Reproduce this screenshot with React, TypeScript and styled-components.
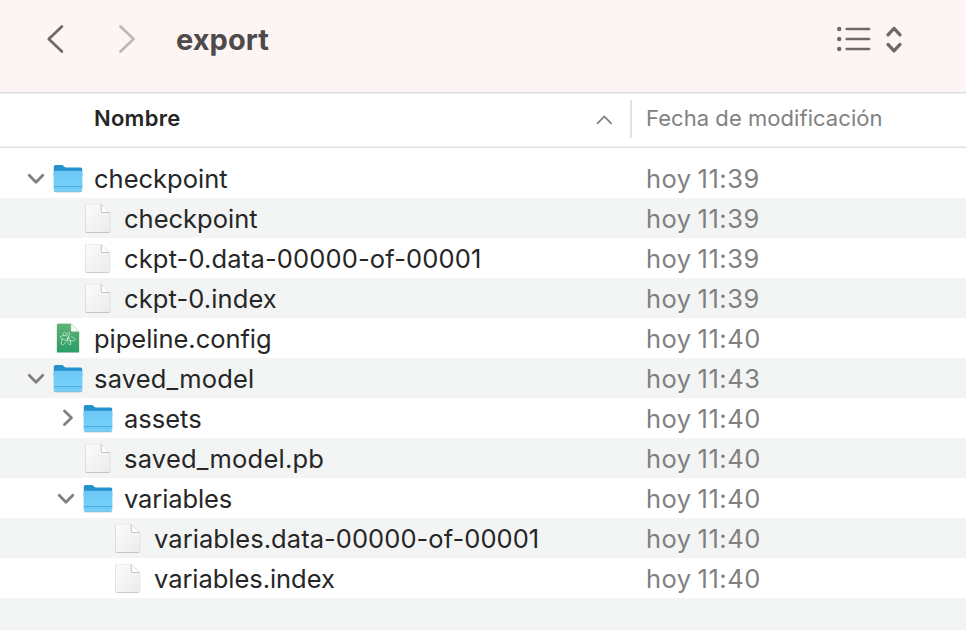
import React from 'react';
import styled, { createGlobalStyle } from 'styled-components';

const GlobalStyle = createGlobalStyle`
  * { box-sizing: border-box; }
  body {
    margin: 0;
    overflow: hidden;
    background: #fff;
    font-family: Inter, "Liberation Sans", sans-serif;
    -webkit-font-smoothing: antialiased;
  }
  svg { display: block; flex: none; overflow: visible; }
`;

const Window = styled.main`
  width: 966px;
  height: 630px;
  display: flex;
  flex-direction: column;
  overflow: hidden;
`;

const Toolbar = styled.header`
  flex: none;
  height: 92px;
  display: flex;
  align-items: center;
  padding: 0 63px 14px 46px;
  background: #fdf4f4;
`;

const NavButton = styled.button<{ $dim?: boolean }>`
  display: flex;
  width: 72px;
  padding: 0;
  border: 0;
  background: none;
  color: ${(p) => (p.$dim ? '#c1b6b7' : '#706768')};
`;

const Title = styled.h1`
  margin: 0 auto 0 -14px;
  padding-top: 2px;
  font-size: 29px;
  line-height: 36px;
  font-weight: 700;
  letter-spacing: 0.05px;
  color: #4d4a4b;
`;

const ViewControl = styled.div`
  display: flex;
  align-items: center;
  gap: 14px;
  color: #706768;
`;

const ColumnHeader = styled.div`
  flex: none;
  height: 56px;
  display: flex;
  align-items: center;
  padding-bottom: 3px;
  border-top: 1px solid #d9dadb;
  border-bottom: 1px solid #dcdddd;
  box-shadow: inset 0 1px #f0f1f1, inset 0 -1px #f3f3f3;
  font-size: 22px;
  line-height: 28px;
`;

const NameHeading = styled.div`
  width: 632px;
  height: 38px;
  display: flex;
  align-items: center;
  justify-content: space-between;
  padding: 0 17px 2px 94px;
  border-right: 2px solid #e3e3e3;
  font-weight: 600;
  letter-spacing: 0.25px;
  color: #262626;
`;

const SortMark = styled.span`
  padding-top: 4px;
  color: #808080;
`;

const DateHeading = styled.div`
  padding: 0 0 2px 14px;
  letter-spacing: 0.05px;
  color: #818181;
`;

const List = styled.div`
  flex: 1;
  padding-top: 10px;
`;

const Row = styled.div`
  height: 40px;
  display: flex;
  align-items: center;
  font-size: 25.5px;
  line-height: 32px;
  &:nth-child(even) { background: #f3f5f4; }
`;

const NameCell = styled.div<{ $depth: number }>`
  width: 646px;
  display: flex;
  align-items: center;
  padding-left: ${(p) => 23 + p.$depth * 30}px;
  color: #262626;
`;

const Disclosure = styled.span`
  width: 30px;
  display: flex;
  padding-top: 1px;
  color: #808080;
`;

const IconSlot = styled.span`
  width: 41px;
  display: flex;
`;

const Label = styled.span<{ $spacing: number }>`
  padding-top: 2px;
  white-space: nowrap;
  letter-spacing: ${(p) => p.$spacing}px;
`;

const DateCell = styled.div`
  padding-top: 2px;
  color: #808080;
  white-space: nowrap;
  letter-spacing: 0.5px;
  word-spacing: -1.8px;
`;

const Stroke = ({ d, w, h, sw }: { d: string; w: number; h: number; sw: number }) => (
  <svg width={w} height={h} viewBox={`0 0 ${w} ${h}`} fill="none" stroke="currentColor" strokeWidth={sw} strokeLinecap="round" strokeLinejoin="round">
    <path d={d} />
  </svg>
);

const Gradients = () => (
  <svg width="0" height="0">
    <defs>
      <linearGradient id="folder" x1="0" y1="0" x2="0" y2="1">
        <stop offset="0" stopColor="#6bc6f4" />
        <stop offset="1" stopColor="#79d3fe" />
      </linearGradient>
      <linearGradient id="paper" x1="0" y1="0" x2="1" y2="1">
        <stop offset="0" stopColor="#fcfcfc" />
        <stop offset="1" stopColor="#ebebeb" />
      </linearGradient>
      <linearGradient id="green" x1="0" y1="0" x2="0" y2="1">
        <stop offset="0" stopColor="#5fb573" />
        <stop offset="1" stopColor="#2b9c68" />
      </linearGradient>
    </defs>
  </svg>
);

const FolderIcon = () => (
  <svg width="30" height="32" viewBox="0 0 30 32">
    <path d="M.8 12h28.4v16.6q0 1.9-1.9 1.9H2.7q-1.9 0-1.9-1.9z" fill="#000" opacity=".2" />
    <path d="M.8 4.9q0-1.8 1.7-1.8h6.1c1.9 0 2.3 2.3 4.2 2.3h14.7q1.7 0 1.7 1.7V14H.8z" fill="#2490cc" />
    <path d="M.7 10.3q0-1.6 1.6-1.6h25.4q1.6 0 1.6 1.6v17.3q0 1.8-1.8 1.8h-25q-1.8 0-1.8-1.8z" fill="url(#folder)" />
    <path d="M1 24.5h28" stroke="#48a8d8" strokeWidth=".9" />
    <path d="M1.4 26.2h27.2M1.8 29.2h26.4" stroke="#57b5e2" strokeWidth=".6" />
  </svg>
);

const FileIcon = () => (
  <svg width="30" height="32" viewBox="0 0 30 32">
    <path d="M2.2 3.8Q2.2 2 4 2h14.2l9 9v18.1q0 1.8-1.8 1.8H4q-1.8 0-1.8-1.8z" fill="#000" opacity=".2" />
    <path d="M2.6 3.8Q2.6 2.2 4.2 2.2h14l8.7 8.6v17.6q0 1.7-1.7 1.7h-21q-1.6 0-1.6-1.7z" fill="url(#paper)" />
    <path d="M18.3 2.4v7.1q0 1 1 1h7.2z" fill="#fdfdfd" />
    <path d="M18.3 2.4v7.1q0 1 1 1h7.2" fill="none" stroke="#bdbdbd" strokeWidth=".9" />
    <path d="m18.3 2.3 8.4 8.3" stroke="#dadada" strokeWidth=".6" />
  </svg>
);

const ConfigIcon = () => (
  <svg width="30" height="32" viewBox="0 0 30 32">
    <path d="M3.7 2.6q0-.9.9-.9H18l8.2 8.2v20q0 .9-.9.9H4.6q-.9 0-.9-.9z" fill="#17613d" opacity=".35" />
    <path d="M4 2.6q0-.9.9-.9h13.5l7.7 7.7v19.9q0 .9-.9.9H4.9q-.9 0-.9-.9z" fill="url(#green)" />
    <path d="M18 1.5v7q0 1 1 1h7.2z" fill="#f7f8f7" stroke="#c4d5ca" strokeWidth=".5" />
    <g fill="none" stroke="#c9ecd2" strokeWidth=".75" strokeLinecap="round">
      <path d="M13.2 13.7c-3.1-.3-5.8.1-6 1.2-.2 1.2 2.7 2.7 6.2 3.5 3.4.8 6.8.8 8.2-.1 1.4-1-.3-2.4-2.9-3.4" />
      <path d="M9.4 16.5c-1.2 3-1.6 5.8-.5 6.4 1.2.6 3.2-1.6 5-4.6 2-3.2 3.3-6.6 2.4-7.6-.6-.7-1.7 0-2.8 1.2" />
      <path d="M11 13.4c-.7-1.6-.6-2.8.2-3 1.1-.4 2.9 1.9 4.5 4.9 1.7 3.1 2.7 6.6 1.7 7.3-.8.5-1.8-.4-2.8-1.7" />
    </g>
    <circle cx="14.5" cy="16.4" r=".8" fill="#e8f8eb" />
  </svg>
);

type Kind = 'folder' | 'file' | 'config';
type Entry = { name: string; kind: Kind; depth: number; open?: boolean; date: string; spacing: number };

const icons: Record<Kind, React.FC> = { folder: FolderIcon, file: FileIcon, config: ConfigIcon };

const entries: Entry[] = [
  { name: 'checkpoint', kind: 'folder', depth: 0, open: true, date: 'hoy 11:39', spacing: 0 },
  { name: 'checkpoint', kind: 'file', depth: 1, date: 'hoy 11:39', spacing: 0 },
  { name: 'ckpt-0.data-00000-of-00001', kind: 'file', depth: 1, date: 'hoy 11:39', spacing: 0.15 },
  { name: 'ckpt-0.index', kind: 'file', depth: 1, date: 'hoy 11:39', spacing: 0.1 },
  { name: 'pipeline.config', kind: 'config', depth: 0, date: 'hoy 11:40', spacing: -0.03 },
  { name: 'saved_model', kind: 'folder', depth: 0, open: true, date: 'hoy 11:43', spacing: 0.18 },
  { name: 'assets', kind: 'folder', depth: 1, open: false, date: 'hoy 11:40', spacing: 0 },
  { name: 'saved_model.pb', kind: 'file', depth: 1, date: 'hoy 11:40', spacing: 0.22 },
  { name: 'variables', kind: 'folder', depth: 1, open: true, date: 'hoy 11:40', spacing: -0.1 },
  { name: 'variables.data-00000-of-00001', kind: 'file', depth: 2, date: 'hoy 11:40', spacing: 0.06 },
  { name: 'variables.index', kind: 'file', depth: 2, date: 'hoy 11:40', spacing: -0.05 },
];

export default function App() {
  return (
    <Window>
      <GlobalStyle />
      <Toolbar>
        <NavButton aria-label="Atrás"><Stroke w={18} h={30} sw={2.7} d="M15.9 2.5 2.8 15l13.1 12.5" /></NavButton>
        <NavButton $dim aria-label="Adelante"><Stroke w={18} h={30} sw={2.7} d="M2.5 2.5 15.6 15 2.5 27.5" /></NavButton>
        <Title>export</Title>
        <ViewControl>
          <svg width="34" height="26" viewBox="0 0 34 26" fill="currentColor">
            {[3, 13, 23].map((y) => (
              <React.Fragment key={y}>
                <circle cx="2.2" cy={y} r="2.2" />
                <rect x="8.4" y={y - 1.3} width="25" height="2.6" rx="1.3" />
              </React.Fragment>
            ))}
          </svg>
          <Stroke w={18} h={28} sw={3.3} d="M3 9.8 9 3.4l6 6.4M3 19.4l6 6.4 6-6.4" />
        </ViewControl>
      </Toolbar>
      <ColumnHeader>
        <NameHeading>
          Nombre
          <SortMark><Stroke w={18} h={12} sw={1.7} d="m2.5 9.4 6.8-7 6.8 7" /></SortMark>
        </NameHeading>
        <DateHeading>Fecha de modificación</DateHeading>
      </ColumnHeader>
      <List>
        {entries.map((e, i) => {
          const Icon = icons[e.kind];
          return (
            <Row key={i}>
              <NameCell $depth={e.depth}>
                <Disclosure>
                  {e.open === true && <Stroke w={26} h={18} sw={2.8} d="m6.2 5.2 6.8 7 6.8-7" />}
                  {e.open === false && <Stroke w={26} h={18} sw={2.8} d="m11.5 1 7 6.8-7 6.8" />}
                </Disclosure>
                <IconSlot><Icon /></IconSlot>
                <Label $spacing={e.spacing}>{e.name}</Label>
              </NameCell>
              <DateCell>{e.date}</DateCell>
            </Row>
          );
        })}
        <Row />
      </List>
      <Gradients />
    </Window>
  );
}
